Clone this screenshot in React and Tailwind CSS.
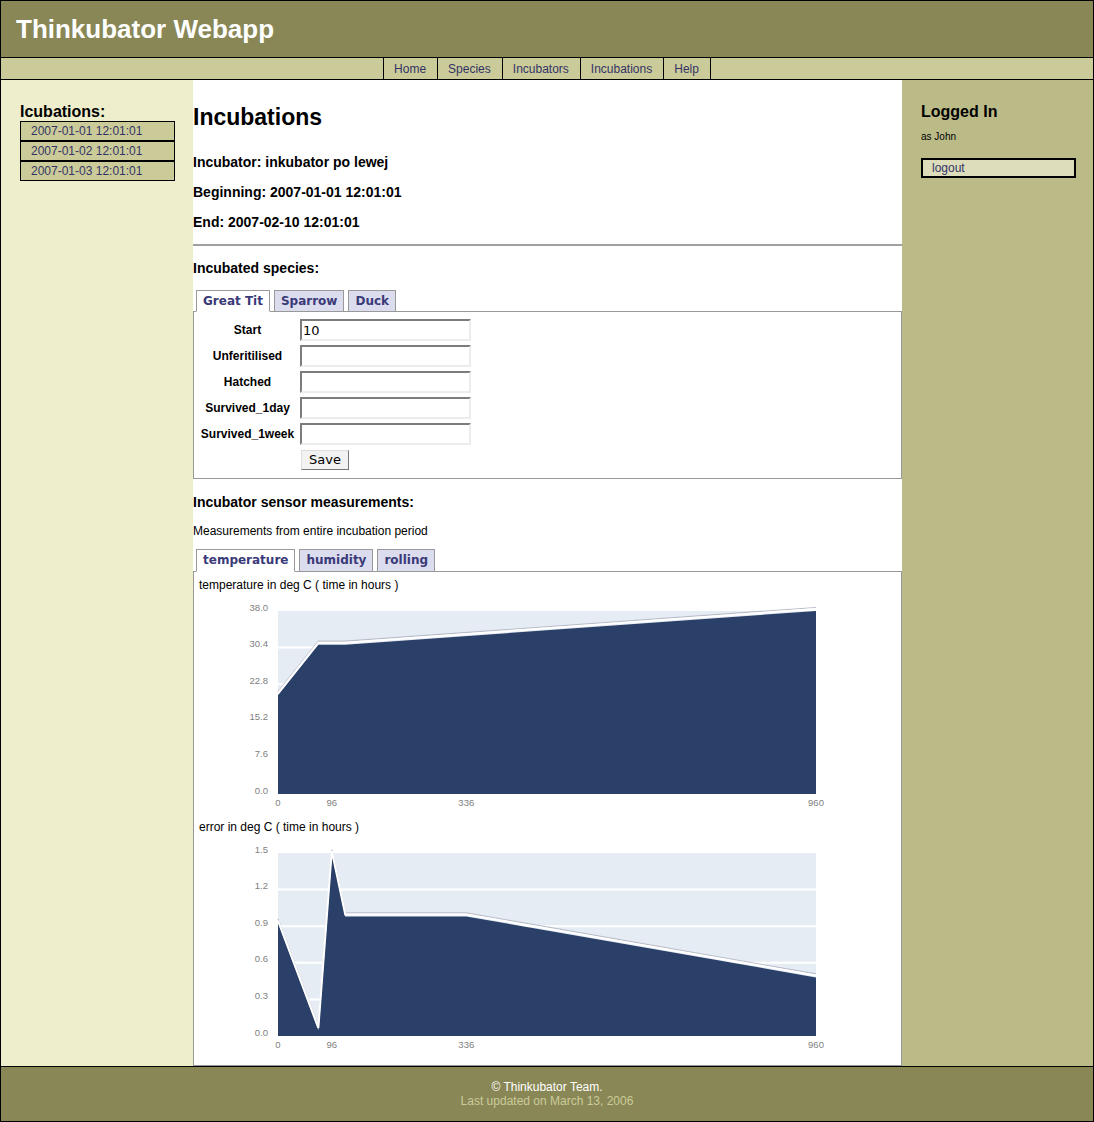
import React from "react";

const sans = { fontFamily: '"Liberation Sans", Arial, sans-serif' };
const verdana = { fontFamily: '"DejaVu Sans", Verdana, sans-serif' };

const incubations = ["2007-01-01 12:01:01", "2007-01-02 12:01:01", "2007-01-03 12:01:01"];
const navLinks = ["Home", "Species", "Incubators", "Incubations", "Help"];
const fields = [
  { label: "Start", value: "10" },
  { label: "Unferitilised", value: "" },
  { label: "Hatched", value: "" },
  { label: "Survived_1day", value: "" },
  { label: "Survived_1week", value: "" },
];

const temperature = [
  [0, 20.5],
  [72, 31],
  [120, 31],
  [960, 38],
];
const error = [
  [0, 0.93],
  [72, 0.05],
  [96, 1.5],
  [120, 0.98],
  [336, 0.98],
  [960, 0.48],
];

const px = (h) => 48 + (h / 960) * 538;

function Chart({ data, max, ticks }) {
  const py = (v) => 197 - (v / max) * 183;
  const area =
    `M${px(0)},197 ` + data.map(([h, v]) => `L${px(h)},${py(v)}`).join(" ") + ` L${px(960)},197 Z`;
  const line = (dy) => data.map(([h, v]) => `${px(h)},${py(v) + dy}`).join(" ");
  return (
    <svg width="600" height="215" className="block ml-[31px]" style={sans}>
      <rect x="48" y="14" width="538" height="183" fill="#e6ecf4" />
      {ticks.slice(1, -1).map((t) => (
        <line key={t} x1="48" x2="586" y1={py(t)} y2={py(t)} stroke="#fff" strokeWidth="2" />
      ))}
      <path d={area} fill="#2a4068" />
      <polyline points={line(-3.5)} fill="none" stroke="#b9bdc8" strokeWidth="1.2" />
      <polyline points={line(-2)} fill="none" stroke="#fff" strokeWidth="2" />
      {ticks.map((t) => (
        <text key={t} x="38" y={py(t) - 0.5} textAnchor="end" fontSize="9.5" fill="#808080">
          {t.toFixed(1)}
        </text>
      ))}
      {[0, 96, 336, 960].map((h) => (
        <text key={h} x={px(h)} y="209" textAnchor="middle" fontSize="9.5" fill="#808080">
          {h}
        </text>
      ))}
    </svg>
  );
}

function Tabs({ items, active, tall }) {
  return (
    <div className="relative z-10 -mb-px flex gap-[4px] pl-[3px]">
      {items.map((t) => (
        <div
          key={t}
          style={verdana}
          className={
            "border border-[#999] px-[6px] py-[3px] text-[12px] font-bold text-[#3a3a78] " +
            (tall ? "leading-[15px] " : "leading-[14px] ") +
            (t === active ? "border-b-white bg-white" : "bg-[#dcdcef]")
          }
        >
          {t}
        </div>
      ))}
    </div>
  );
}

export default function App() {
  return (
    <div className="w-[1094px] border border-black bg-white" style={sans}>
      {/* Header */}
      <div className="flex h-[57px] items-center border-b border-black bg-[#898756] pl-[15px]">
        <h1 className="text-[26px] font-bold leading-none text-white">Thinkubator Webapp</h1>
      </div>

      {/* Nav */}
      <div className="flex h-[22px] justify-center border-b border-black bg-[#cbcb99]">
        <div className="flex border-l border-black">
          {navLinks.map((l) => (
            <a key={l} href="#" className="flex items-center border-r border-black pl-[10px] pr-[11px] text-[12px] text-[#333366]">
              {l}
            </a>
          ))}
        </div>
      </div>

      <div className="flex">
        {/* Left */}
        <div className="w-[192px] shrink-0 bg-[#eeeecc] pl-[19px] pt-[23px]">
          <h2 className="text-[16px] font-bold leading-[18px] text-black">Icubations:</h2>
          <div className="w-[155px]">
            {incubations.map((d) => (
              <div key={d} className="h-[20px] border border-black bg-[#cbcb99] pl-[10px] text-[12px] leading-[18px] text-[#333366]">
                {d}
              </div>
            ))}
          </div>
        </div>

        {/* Center */}
        <div className="w-[709px] shrink-0 pt-[23px] text-black">
          <h1 className="text-[23px] font-bold leading-[28px]">Incubations</h1>
          <p className="mt-[23px] text-[14px] font-bold leading-[16px]">Incubator: inkubator po lewej</p>
          <p className="mt-[14px] text-[14px] font-bold leading-[16px]">Beginning: 2007-01-01 12:01:01</p>
          <p className="mt-[14px] text-[14px] font-bold leading-[16px]">End: 2007-02-10 12:01:01</p>
          <div className="mt-[14px] border-t-2 border-[#a0a0a0]" />
          <h3 className="mt-[14px] text-[14px] font-bold leading-[16px]">Incubated species:</h3>

          <div className="mt-[14px]">
            <Tabs items={["Great Tit", "Sparrow", "Duck"]} active="Great Tit" />
            <div className="border border-[#999] pb-[8px] pt-[7px]">
              <div className="ml-[3px] grid grid-cols-[101px_171px] gap-x-[2px] gap-y-[4px]">
                {fields.map((f) => (
                  <React.Fragment key={f.label}>
                    <div className="flex items-center justify-center text-[12px] font-bold">{f.label}</div>
                    <input
                      readOnly
                      value={f.value}
                      style={verdana}
                      className="h-[22px] border-2 border-b-[#ececec] border-l-[#7c7c7c] border-r-[#ececec] border-t-[#7c7c7c] px-[1px] text-[13px] outline-none"
                    />
                  </React.Fragment>
                ))}
                <div />
                <button
                  style={verdana}
                  className="mt-[1px] ml-[1px] h-[20px] w-[48px] border border-b-[#777] border-l-[#ddd] border-r-[#777] border-t-[#ddd] bg-[#f2f2f2] text-[13px] leading-[18px]"
                >
                  Save
                </button>
              </div>
            </div>
          </div>

          <h3 className="mt-[15px] text-[14px] font-bold leading-[16px]">Incubator sensor measurements:</h3>
          <p className="mt-[14px] text-[12px] leading-[14px]">Measurements from entire incubation period</p>

          <div className="mt-[11px]">
            <Tabs items={["temperature", "humidity", "rolling"]} active="temperature" tall />
            <div className="border border-[#999] pb-[11px] pl-[5px] pt-[6px]">
              <p className="text-[12px] leading-[14px]">temperature in deg C ( time in hours )</p>
              <div className="mt-[5px]">
                <Chart data={temperature} max={38} ticks={[0, 7.6, 15.2, 22.8, 30.4, 38]} />
              </div>
              <p className="mt-[8px] text-[12px] leading-[14px]">error in deg C ( time in hours )</p>
              <div className="mt-[5px]">
                <Chart data={error} max={1.5} ticks={[0, 0.3, 0.6, 0.9, 1.2, 1.5]} />
              </div>
            </div>
          </div>
        </div>

        {/* Right */}
        <div className="flex-1 bg-[#bbbb88] pl-[19px] pt-[23px]">
          <h2 className="text-[16px] font-bold leading-[18px] text-black">Logged In</h2>
          <p className="mt-[10px] text-[10px] leading-[12px] text-black">as John</p>
          <div className="mt-[15px] h-[20px] w-[155px] border-2 border-black bg-[#ddddbb] pl-[9px] text-[12px] leading-[16px] text-[#333366]">
            logout
          </div>
        </div>
      </div>

      {/* Footer */}
      <div className="flex h-[55px] flex-col items-center justify-center border-t border-black bg-[#898756] text-[12px] leading-[14px]">
        <p className="text-white">© Thinkubator Team.</p>
        <p className="text-[#cbcb99]">Last updated on March 13, 2006</p>
      </div>
    </div>
  );
}
